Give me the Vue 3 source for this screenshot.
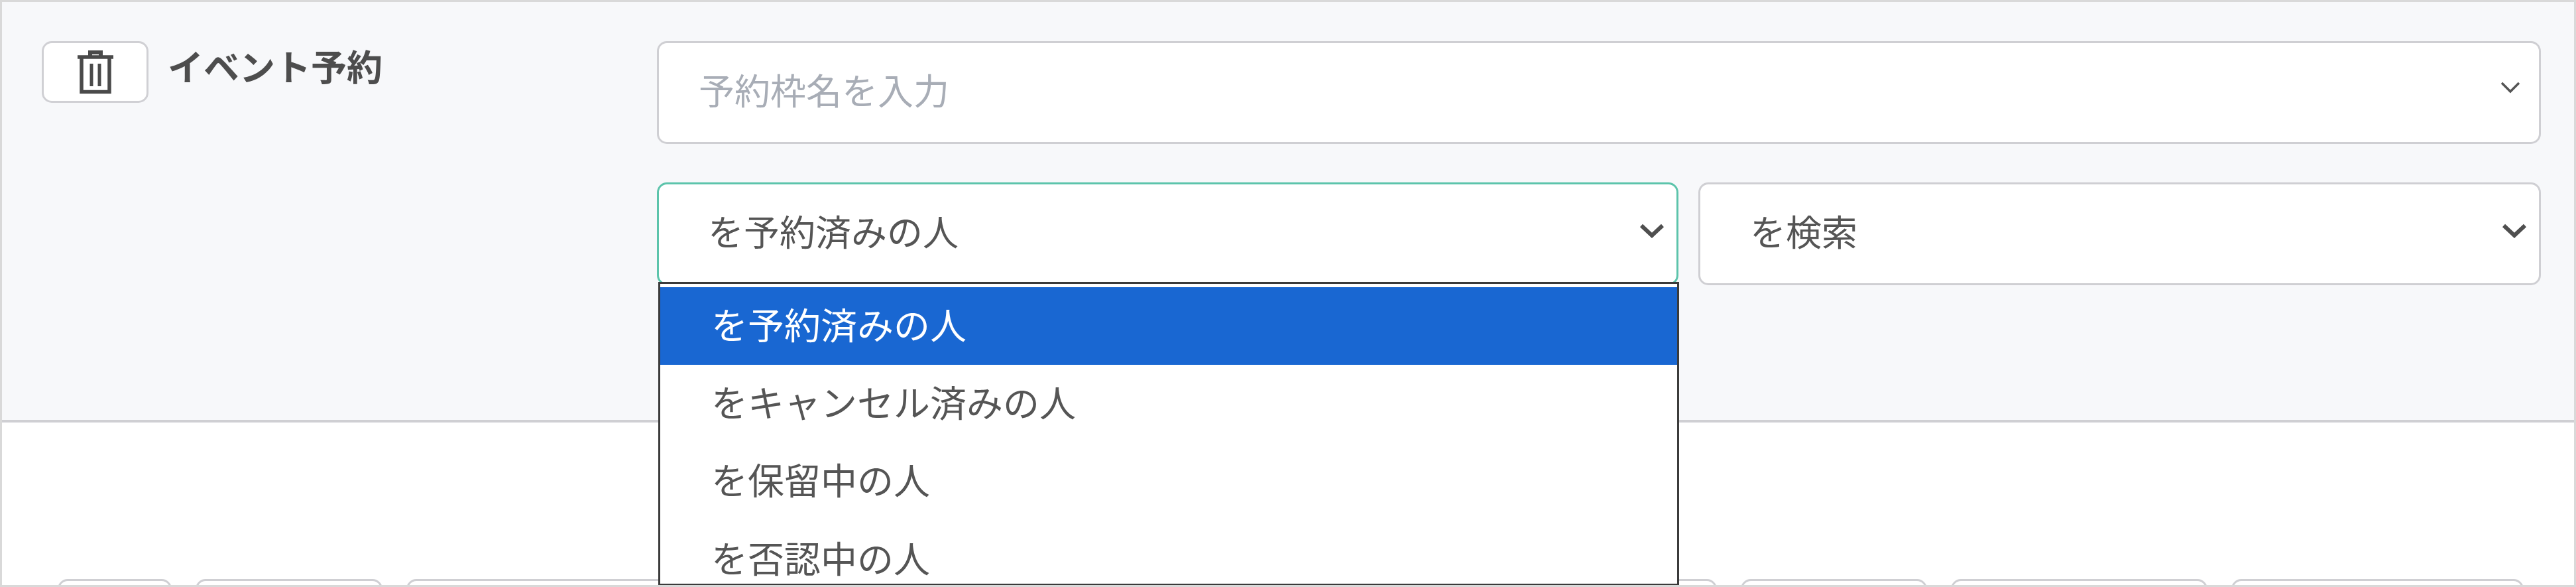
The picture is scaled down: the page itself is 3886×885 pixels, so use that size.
<script setup>
import { ref } from "vue";

const statusOptions = ref(["を予約済みの人", "をキャンセル済みの人", "を保留中の人", "を否認中の人"]);
const chipWidths = ref([172, 282, 486, 340, 340, 340, 327, 281, 387, 441]);
</script>

<template>
  <div class="page">
    <section class="panel">
      <div class="head">
        <button class="trash" type="button">
          <svg width="56" height="66" viewBox="0 0 56 66" fill="none" stroke="#4a4a4a">
            <path d="M20 8V3h16v5" stroke-width="6" />
            <path d="M1 10h54" stroke-width="5.500" />
            <path d="M7 10v52.500h42V10" stroke-width="5.500" />
            <path d="M22 20v34M34 20v34" stroke-width="5" />
          </svg>
        </button>
        <h2 class="title">イベント予約</h2>
      </div>
      <div class="fields">
        <div class="select wide">
          <span class="placeholder">予約枠名を入力</span>
          <svg class="thin" width="30" height="18" viewBox="0 0 30 18" fill="none" stroke="#555" stroke-width="3.500">
            <path d="M2 2l13 13L28 2" />
          </svg>
        </div>
        <div class="row">
          <div class="status">
            <div class="select focused">
              <span>を予約済みの人</span>
              <svg width="38" height="22" viewBox="0 0 38 22" fill="none" stroke="#4f4f4f" stroke-width="6">
                <path d="M3 3l16 15L35 3" />
              </svg>
            </div>
            <ul class="dropdown">
              <li v-for="(o, i) in statusOptions" :key="o" :class="{ active: i === 0 }">{{ o }}</li>
            </ul>
          </div>
          <div class="select search">
            <span>を検索</span>
            <svg width="38" height="22" viewBox="0 0 38 22" fill="none" stroke="#4f4f4f" stroke-width="6">
              <path d="M3 3l16 15L35 3" />
            </svg>
          </div>
        </div>
      </div>
    </section>
    <div class="chips">
      <div v-for="(w, i) in chipWidths" :key="i" class="chip" :style="{ width: w + 'px' }"></div>
    </div>
  </div>
</template>

<style>
html,
body {
  margin: 0;
  background: #fff;
}
</style>

<style scoped>
.page {
  box-sizing: border-box;
  width: 3886px;
  height: 885px;
  border: 3px solid #d9d9d9;
  overflow: hidden;
  background: #fff;
  color: #555;
  font-family: "Noto Sans CJK JP", "Noto Sans", sans-serif;
  font-size: 54px;
}

.panel {
  display: flex;
  box-sizing: border-box;
  height: 634px;
  padding: 59px 50px 0 60px;
  background: #f7f8fa;
  border-bottom: 4px solid #cfcfd3;
}

.head {
  display: flex;
  align-items: flex-start;
  gap: 29px;
  width: 928px;
  flex-shrink: 0;
}

.trash {
  display: flex;
  align-items: center;
  justify-content: center;
  box-sizing: border-box;
  width: 161px;
  height: 93px;
  padding: 0;
  background: #fff;
  border: 3px solid #d0d0d4;
  border-radius: 15px;
}

.title {
  margin: 2px 0 0;
  font-size: 54px;
  font-weight: 700;
  line-height: 70px;
  color: #4d4d4d;
}

.fields {
  display: flex;
  flex-direction: column;
  gap: 58px;
  flex: 1;
}

.select {
  display: flex;
  align-items: center;
  justify-content: space-between;
  box-sizing: border-box;
  height: 155px;
  padding: 0 18px 10px 74px;
  background: #fff;
  border: 3px solid #cfcfd3;
  border-radius: 15px;
}

.wide {
  padding-left: 60px;
  padding-right: 28px;
}

.thin {
  margin-bottom: 6px;
}

.placeholder {
  color: #a8adb6;
}

.row {
  display: flex;
  gap: 30px;
}

.status {
  position: relative;
  width: 1541px;
  flex-shrink: 0;
}

.focused {
  border-color: #5cc4ab;
}

.search {
  flex: 1;
  padding-left: 75px;
}

.dropdown {
  position: absolute;
  top: 150px;
  left: 2px;
  right: -1px;
  box-sizing: border-box;
  height: 458px;
  margin: 0;
  padding: 5px 0 0;
  list-style: none;
  overflow: hidden;
  background: #fff;
  border: 3px solid #3b3b3b;
  font-size: 55px;
}

.dropdown li {
  display: flex;
  align-items: center;
  box-sizing: border-box;
  height: 117.300px;
  padding: 0 0 10px 77px;
}

.dropdown li.active {
  background: #1967d2;
  color: #fff;
}

.chips {
  display: flex;
  gap: 36px;
  padding: 236px 0 0 84px;
}

.chip {
  flex-shrink: 0;
  box-sizing: border-box;
  height: 92px;
  background: #fff;
  border: 3px solid #cfcfd3;
  border-radius: 15px;
}
</style>
